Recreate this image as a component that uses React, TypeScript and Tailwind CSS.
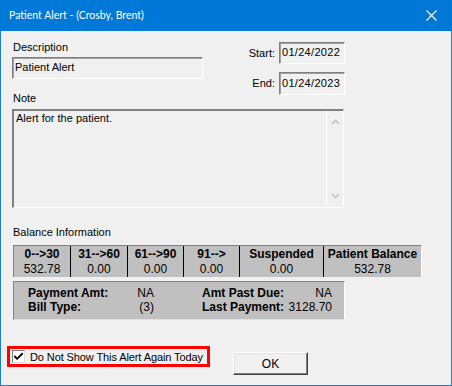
import { Check } from 'lucide-react';

const sunken =
  'border border-t-[#808080] border-l-[#808080] border-r-white border-b-white shadow-[inset_1px_1px_0_#a0a0a0]';

const headers = ['0-->30', '31-->60', '61-->90', '91-->', 'Suspended', 'Patient Balance'];
const values = ['532.78', '0.00', '0.00', '0.00', '0.00', '532.78'];

function Chevron({ up }: { up?: boolean }) {
  return (
    <svg width="9" height="6" viewBox="0 0 9 6">
      <polyline
        points={up ? '1,5 4.5,1.5 8,5' : '1,1 4.5,4.5 8,1'}
        fill="none"
        stroke="#c4c4c4"
        strokeWidth="1.6"
      />
    </svg>
  );
}

export default function App() {
  return (
    <div className="w-[452px] h-[386px] flex flex-col bg-[#f0f0f0] border-x border-b border-[#1c7fd5] font-['Liberation_Sans',Arial,sans-serif] text-black">
      {/* title bar */}
      <div className="h-[31px] -mx-px bg-[#0078d7] flex items-center justify-between pl-[9px] pr-[10px]">
        <span className="text-white text-[10.5px] font-['Lato',sans-serif]">
          Patient Alert - (Crosby, Brent)
        </span>
        <svg width="11" height="11" viewBox="0 0 11 11" className="mr-[5px]">
          <path d="M0.5 0.5 L10.5 10.5 M10.5 0.5 L0.5 10.5" stroke="white" strokeWidth="1.1" />
        </svg>
      </div>

      <div className="flex flex-col pt-[10px]">
        {/* description / dates */}
        <div className="flex items-start pl-[11px]">
          <div className="w-[192px] flex flex-col">
            <div className="h-[13px] text-[11px] leading-[13px] pl-px">Description</div>
            <div className={`mt-[3px] h-[22px] w-[191px] ${sunken} text-[11px] leading-[13px] px-[2px] pt-[3px]`}>
              Patient Alert
            </div>
            <div className="mt-[13px] h-[13px] text-[11px] leading-[13px] pl-px">Note</div>
          </div>
          <div className="w-[141px] flex flex-col items-end">
            <div className="mt-px flex items-center gap-[4px]">
              <span className="text-[11px]">Start:</span>
              <div className={`h-[22px] w-[66px] ${sunken} text-[11px] leading-[13px] pl-[2px] pt-[3px] tracking-[0.3px]`}>
                01/24/2022
              </div>
            </div>
            <div className="mt-[8px] flex items-center gap-[4px]">
              <span className="text-[11px]">End:</span>
              <div className={`h-[23px] w-[66px] ${sunken} text-[11px] leading-[13px] pl-[2px] pt-[4px] tracking-[0.3px]`}>
                01/24/2023
              </div>
            </div>
          </div>
        </div>

        {/* note */}
        <div className="ml-[11px] mt-[4px] w-[332px] h-[99px] flex border-t-2 border-l-2 border-t-[#808080] border-l-[#808080] border-r border-b border-r-white border-b-white">
          <div className="flex-1 text-[11px] leading-[13px] pl-[2px] pt-[1px]">Alert for the patient.</div>
          <div className="w-[17px] border-l border-white flex flex-col items-center justify-between py-[8px]">
            <Chevron up />
            <Chevron />
          </div>
        </div>

        {/* balance */}
        <div className="mt-[18px] ml-[12px] h-[13px] text-[11px] leading-[13px]">Balance Information</div>
        <div className="ml-[12px] mt-[6px] w-[409px] bg-[#c0c0c0] border-t border-l border-[#808080] border-r border-r-white">
          <div className="grid grid-cols-[56px_57px_56px_56px_84px_98px]">
            {headers.map((h, i) => (
              <div
                key={h}
                className={`h-[16px] text-[12px] leading-[16px] font-bold text-center ${i > 0 ? 'border-l border-black' : ''}`}
              >
                {h}
              </div>
            ))}
            {values.map((v, i) => (
              <div
                key={i}
                className={`h-[15px] text-[12px] leading-[15px] text-center ${i > 0 ? 'border-l border-black' : ''}`}
              >
                {v}
              </div>
            ))}
          </div>
        </div>

        {/* summary */}
        <div className="ml-[12px] mt-[4px] w-[332px] h-[39px] bg-[#c0c0c0] border border-t-[#808080] border-l-[#808080] border-r-white border-b-[#e0e0e0] pl-[14px] pt-[4px] text-[12px] leading-[14px]">
          <div className="grid grid-cols-[126px_130px] gap-x-[48px]">
            <div className="flex justify-between">
              <span className="font-bold">Payment Amt:</span>
              <span>NA</span>
            </div>
            <div className="flex justify-between">
              <span className="font-bold">Amt Past Due:</span>
              <span>NA</span>
            </div>
            <div className="flex justify-between">
              <span className="font-bold">Bill Type:</span>
              <span>(3)</span>
            </div>
            <div className="flex justify-between">
              <span className="font-bold">Last Payment:</span>
              <span>3128.70</span>
            </div>
          </div>
        </div>

        {/* footer */}
        <div className="mt-[26px] ml-[6px] flex items-start">
          <div className="h-[21px] w-[203px] border-[3px] border-[#ff0000] flex items-center pl-[2px] gap-[5px]">
            <div className="w-[13px] h-[13px] bg-white border border-t-[#808080] border-l-[#808080] border-r-[#dcdcdc] border-b-[#dcdcdc] flex items-center justify-center">
              <Check className="w-[11px] h-[11px]" strokeWidth={4} color="black" />
            </div>
            <span className="text-[11px] leading-[14px] whitespace-nowrap tracking-[-0.1px]">Do Not Show This Alert Again Today</span>
          </div>
          <button className="ml-[23px] mt-[6px] w-[75px] h-[23px] bg-[#f0f0f0] border border-t-white border-l-white border-r-[#404040] border-b-[#404040] shadow-[inset_-1px_-1px_0_#808080,inset_1px_1px_0_#e3e3e3] text-[12px] leading-[20px] text-center">
            OK
          </button>
        </div>
      </div>
    </div>
  );
}
